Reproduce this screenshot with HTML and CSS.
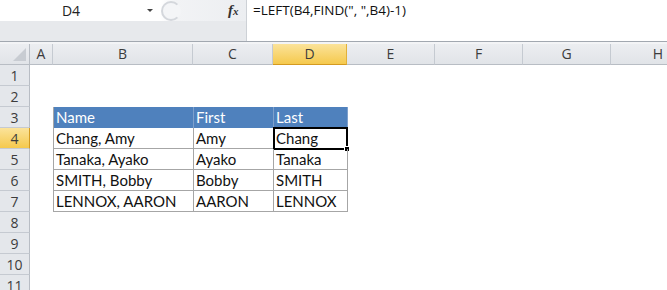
FILE: index.html
```html
<!DOCTYPE html>
<html lang="en">
<head>
    <meta charset="UTF-8">
    <title>LEFT with FIND</title>
    <link rel="stylesheet" href="styles.css">
</head>
<body>
<div class="formula-bar">
    <div class="name-side">
        <div class="name-box">
            <span class="cell-ref">D4</span>
            <span class="drop-arrow"></span>
            <span class="grip"></span>
            <span class="fx">f<small>x</small></span>
        </div>
        <div class="name-fill"></div>
    </div>
    <div class="formula-input">=LEFT(B4,FIND(", ",B4)-1)</div>
</div>
<div class="bar-gap"></div>

<div class="sheet">
    <!-- column headers -->
    <div class="col-head corner"><span class="corner-tri"></span></div>
    <div class="col-head">A</div>
    <div class="col-head">B</div>
    <div class="col-head">C</div>
    <div class="col-head active">D</div>
    <div class="col-head">E</div>
    <div class="col-head">F</div>
    <div class="col-head">G</div>
    <div class="col-head last">H</div>

    <!-- row headers -->
    <div class="row-head" style="grid-row: 2">1</div>
    <div class="row-head" style="grid-row: 3">2</div>
    <div class="row-head" style="grid-row: 4">3</div>
    <div class="row-head active" style="grid-row: 5">4</div>
    <div class="row-head" style="grid-row: 6">5</div>
    <div class="row-head" style="grid-row: 7">6</div>
    <div class="row-head" style="grid-row: 8">7</div>
    <div class="row-head" style="grid-row: 9">8</div>
    <div class="row-head" style="grid-row: 10">9</div>
    <div class="row-head" style="grid-row: 11">10</div>
    <div class="row-head" style="grid-row: 12">11</div>

    <!-- data block B3:D7 -->
    <div class="names">
        <div class="cell th">Name</div>
        <div class="cell th">First</div>
        <div class="cell th">Last</div>

        <div class="cell">Chang, Amy</div>
        <div class="cell">Amy</div>
        <div class="cell selected">Chang<span class="fill-handle"></span></div>

        <div class="cell">Tanaka, Ayako</div>
        <div class="cell">Ayako</div>
        <div class="cell">Tanaka</div>

        <div class="cell">SMITH, Bobby</div>
        <div class="cell">Bobby</div>
        <div class="cell">SMITH</div>

        <div class="cell">LENNOX, AARON</div>
        <div class="cell">AARON</div>
        <div class="cell">LENNOX</div>
    </div>
</div>
</body>
</html>
```

FILE: styles.css
```css
:root {
    --head-bg: #e4e7eb;
    --head-line: #c5cad1;
    --head-text: #3c3c3c;
    --active-bg: #f8d26a;
    --table-blue: #4f81bd;
    --grid-line: #a6a6a6;
}

* {
    margin: 0;
    padding: 0;
    box-sizing: border-box;
}

body {
    width: 667px;
    height: 290px;
    overflow: hidden;
    background: #fff;
    font-family: "Open Sans", "Liberation Sans", sans-serif;
    color: #111;
}

/* ---------- formula bar ---------- */
.formula-bar {
    display: flex;
    height: 42px;
    border-bottom: 1px solid #a2a8b0;
}

.name-side {
    width: 246px;
    display: flex;
    flex-direction: column;
}

.name-box {
    height: 21px;
    display: flex;
    align-items: center;
    position: relative;
    background: linear-gradient(to right, #fff 0, #fff 160px, #f2f3f5 176px, #eceef1 100%);
}

.cell-ref {
    width: 142px;
    text-align: center;
    font-size: 14px;
    color: #222;
}

.drop-arrow {
    width: 0;
    height: 0;
    border-left: 3px solid transparent;
    border-right: 3px solid transparent;
    border-top: 3px solid #444;
    margin-left: 5px;
}

.grip {
    width: 20px;
    height: 20px;
    margin-left: 8px;
    border-radius: 50%;
    border: 2px solid #d4d7dc;
    border-right-color: transparent;
    background: #f4f5f7;
}

.fx {
    margin-left: 47px;
    font-family: "Liberation Serif", serif;
    font-style: italic;
    font-weight: bold;
    font-size: 15px;
    color: #333;
}

.fx small {
    font-size: 11px;
}

.name-fill {
    flex: 1;
    background: #e7e9ec;
}

.formula-input {
    flex: 1;
    padding: 1px 0 0 6px;
    border-left: 1px solid #cdd1d6;
    font-family: "Open Sans", "Liberation Sans", sans-serif;
    font-size: 13.5px;
    color: #111;
}

.bar-gap {
    height: 2px;
    background: #f3f4f6;
}

/* ---------- sheet grid ---------- */
.sheet {
    display: grid;
    grid-template-columns: 30px 23px 140px 80px 74px 88px 88px 88px 56px;
    grid-template-rows: 21px repeat(11, 21px);
    font-family: "Open Sans", "Liberation Sans", sans-serif;
}

.col-head {
    grid-row: 1;
    background: linear-gradient(#eceef1, #e1e4e8);
    border-right: 1px solid var(--head-line);
    border-bottom: 1px solid #b8bdc4;
    text-align: center;
    font-size: 14px;
    line-height: 20px;
    color: var(--head-text);
}

.col-head.last {
    border-right: none;
    text-align: right;
    padding-right: 4px;
}

.col-head.active {
    background: linear-gradient(#fbe39a, #f5c94d);
    border-bottom: 1px solid #d49a20;
    border-right-color: #e2b13a;
}

.corner {
    position: relative;
    border-right-color: #b8bdc4;
}

.corner-tri {
    position: absolute;
    right: 3px;
    bottom: 3px;
    width: 0;
    height: 0;
    border-left: 13px solid transparent;
    border-bottom: 13px solid #c8ccd2;
}

.row-head {
    grid-column: 1;
    background: var(--head-bg);
    border-right: 1px solid #b8bdc4;
    border-bottom: 1px solid var(--head-line);
    text-align: center;
    font-size: 14px;
    line-height: 21px;
    color: var(--head-text);
}

.row-head.active {
    background: linear-gradient(#fbe39a, #f5c94d);
    border-right-color: #d49a20;
}

/* ---------- names table ---------- */
.names {
    grid-column: 3 / 6;
    grid-row: 4 / 9;
    display: grid;
    grid-template-columns: 140px 80px 74px;
    grid-template-rows: repeat(5, 21px);
    border-left: 1px solid var(--grid-line);
}

.cell {
    position: relative;
    padding: 0 0 0 2px;
    border-right: 1px solid var(--grid-line);
    border-bottom: 1px solid var(--grid-line);
    font-family: "Lato", "Open Sans", sans-serif;
    font-size: 15px;
    line-height: 21px;
    white-space: nowrap;
}

.cell.th {
    background: var(--table-blue);
    color: #fff;
    border-right-color: #7ea0cc;
    border-bottom: none;
}

.cell.selected {
    border: 2px solid #000;
    margin: -1px 0 -1px -1px;
    padding-left: 1px;
    line-height: 19px;
}

.fill-handle {
    position: absolute;
    right: -4px;
    bottom: -4px;
    width: 6px;
    height: 6px;
    background: #000;
    border: 1px solid #fff;
}
```
